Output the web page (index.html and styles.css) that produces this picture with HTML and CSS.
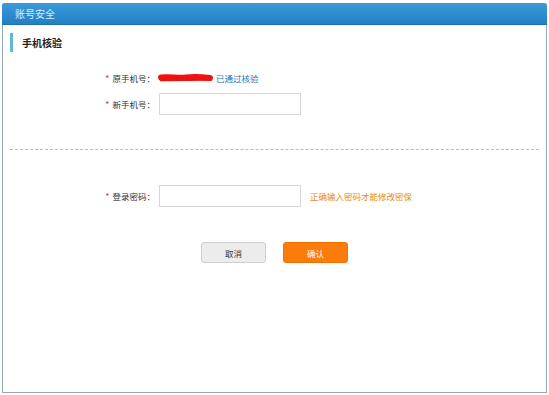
FILE: index.html
```html
<!DOCTYPE html>
<html lang="zh">
<head>
<meta charset="utf-8">
<link rel="stylesheet" href="styles.css">
</head>
<body>
<div class="frame">
  <div class="header">账号安全</div>
  <div class="title"><span class="bar"></span><span class="title-text">手机核验</span></div>
  <div class="form top-form">
    <div class="row">
      <div class="label"><span class="star">*</span>原手机号：</div>
      <div class="value">
        <svg class="scribble" width="56" height="10" viewBox="0 0 56 10"><path d="M3 4.5 C12 3.5 20 5.5 28 4.5 S44 4 52 5" stroke="#ee1111" stroke-width="6" stroke-linecap="round" fill="none"/><path d="M3 7 L53 6.5" stroke="#ee1111" stroke-width="2.5" stroke-linecap="round" fill="none"/></svg>
        <a class="link">已通过核验</a>
      </div>
    </div>
    <div class="row">
      <div class="label"><span class="star">*</span>新手机号：</div>
      <div class="value"><input class="input" type="text"></div>
    </div>
  </div>
  <div class="divider"></div>
  <div class="form">
    <div class="row">
      <div class="label"><span class="star">*</span>登录密码：</div>
      <div class="value"><input class="input" type="password"><span class="hint">正确输入密码才能修改密保</span></div>
    </div>
  </div>
  <div class="buttons">
    <button class="btn cancel">取消</button>
    <button class="btn ok">确认</button>
  </div>
</div>
</body>
</html>
```
FILE: styles.css
```css
html, body { margin: 0; padding: 0; background: #fff; }
body { font-family: "Noto Sans CJK SC", "DejaVu Sans", sans-serif; color: #333; }
.frame {
  margin: 3px 2px 0 2px;
  height: 389px;
  border: 1px solid #8fa9b9;
  border-top: none;
  border-radius: 3px 3px 0 0;
  background: #fff;
  box-sizing: content-box;
}
.header {
  height: 21px;
  line-height: 21px;
  background: linear-gradient(#3c9ad9, #2181c6);
  border-bottom: 1px solid #1e6fae;
  border-radius: 3px 3px 0 0;
  color: #dcecf9;
  font-size: 10px;
  padding-left: 13px;
  margin: 0 -1px;
}
.title {
  display: flex;
  align-items: center;
  margin-top: 8px;
  margin-left: 7px;
  height: 19px;
}
.bar { width: 3px; height: 19px; background: #63b6e0; }
.title-text { margin-left: 9px; font-size: 10px; font-weight: bold; color: #222; }
.form { display: flex; flex-direction: column; gap: 4px; }
.top-form { margin-top: 15px; }
.row { display: grid; grid-template-columns: 152px 1fr; column-gap: 4px; height: 22px; align-items: center; }
.label { text-align: right; font-size: 8.5px; color: #333; }
.star { color: #e03030; margin-right: 3px; font-size: 9px; }
.value { display: flex; align-items: center; }
.scribble { margin-left: -1px; }
.link { color: #1f6fb5; font-size: 8.5px; margin-left: 2px; }
.input {
  width: 142px; height: 22px; box-sizing: border-box;
  border: 1px solid #d6d6d6; margin: 0; padding: 0 4px;
  background: #fff; outline: none;
}
.hint { color: #e8891a; font-size: 8.5px; margin-left: 9px; }
.divider { margin: 34px 7px 35px 7px; border-top: 1px dashed #bdbdbd; }
.buttons { display: flex; justify-content: center; gap: 17px; margin-top: 35px; }
.btn {
  width: 65px; height: 21px; padding: 0; font-family: inherit; font-size: 8.5px;
  border-radius: 3px; cursor: pointer;
}
.cancel { background: #ececec; border: 1px solid #cfcfcf; color: #333; }
.ok { background: #fb7c0c; border: 1px solid #f27200; color: #fff; }
```
